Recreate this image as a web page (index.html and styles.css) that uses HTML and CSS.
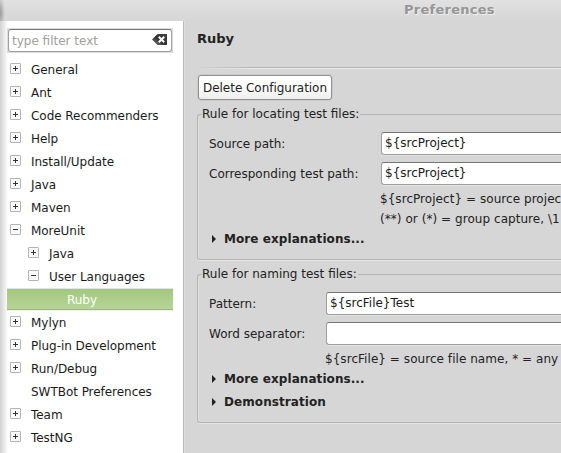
FILE: index.html
```html
<!DOCTYPE html>
<html lang="en">
<head>
<meta charset="utf-8">
<title>Preferences</title>
<link rel="stylesheet" href="styles.css">
</head>
<body>
<div class="window">
  <header class="titlebar"><span class="title">Preferences</span></header>
  <div class="content">
    <aside class="sidebar">
      <div class="filter">
        <div class="filter-box">
          <span>type filter text</span>
          <svg class="clear" width="15" height="11" viewBox="0 0 15 11">
            <defs><linearGradient id="key" x1="0" y1="1" x2="1" y2="0"><stop offset="0" stop-color="#777"/><stop offset=".5" stop-color="#333"/><stop offset="1" stop-color="#444"/></linearGradient></defs>
            <path d="M0 5.5L5 .5Q5.500 0 6.500 0H15V11H6.500Q5.500 11 5 10.500Z" fill="url(#key)"/>
            <path d="M7.500 3.500L11.500 7.500M11.500 3.500L7.500 7.500" stroke="#fff" stroke-width="2" stroke-linecap="square"/>
          </svg>
        </div>
      </div>
      <ul class="tree">
        <li><i class="toggle plus"></i><span>General</span></li>
        <li><i class="toggle plus"></i><span>Ant</span></li>
        <li><i class="toggle plus"></i><span>Code Recommenders</span></li>
        <li><i class="toggle plus"></i><span>Help</span></li>
        <li><i class="toggle plus"></i><span>Install/Update</span></li>
        <li><i class="toggle plus"></i><span>Java</span></li>
        <li><i class="toggle plus"></i><span>Maven</span></li>
        <li><i class="toggle"></i><span>MoreUnit</span></li>
        <li class="child"><i class="toggle plus"></i><span>Java</span></li>
        <li class="child"><i class="toggle"></i><span>User Languages</span></li>
        <li class="grandchild selected"><span>Ruby</span></li>
        <li><i class="toggle plus"></i><span>Mylyn</span></li>
        <li><i class="toggle plus"></i><span>Plug-in Development</span></li>
        <li><i class="toggle plus"></i><span>Run/Debug</span></li>
        <li class="leaf"><span>SWTBot Preferences</span></li>
        <li><i class="toggle plus"></i><span>Team</span></li>
        <li><i class="toggle plus"></i><span>TestNG</span></li>
      </ul>
    </aside>
    <main class="page">
      <h1>Ruby</h1>
      <div class="rule"></div>
      <button class="button">Delete Configuration</button>
      <fieldset class="group locating">
        <legend>Rule for locating test files:</legend>
        <div class="field"><label>Source path:</label><div class="input">${srcProject}</div></div>
        <div class="field"><label>Corresponding test path:</label><div class="input">${srcProject}</div></div>
        <p class="hint">${srcProject} = source projec<br>(**) or (*) = group capture, \1</p>
        <div class="expander"><i class="arrow"></i>More explanations...</div>
      </fieldset>
      <fieldset class="group naming">
        <legend>Rule for naming test files:</legend>
        <div class="field"><label>Pattern:</label><div class="input">${srcFile}Test</div></div>
        <div class="field"><label>Word separator:</label><div class="input"></div></div>
        <p class="hint">${srcFile} = source file name, * = any</p>
        <div class="expander"><i class="arrow"></i>More explanations...</div>
        <div class="expander"><i class="arrow"></i>Demonstration</div>
      </fieldset>
    </main>
  </div>
</div>
</body>
</html>
```
FILE: styles.css
```css
* { box-sizing: border-box; }
body {
  margin: 0;
  width: 561px;
  height: 453px;
  overflow: hidden;
  background: #d6d6d6;
  color: #222;
  font: 12px/20px "DejaVu Sans", sans-serif;
}
.window { width: 561px; height: 453px; overflow: hidden; }
.titlebar {
  height: 21px;
  padding-left: 404px;
  background:
    radial-gradient(ellipse 5px 18px at 0 13px, #999, transparent),
    linear-gradient(#e1e1e1, #d6d6d6);
}
.title {
  display: block;
  font-weight: bold;
  font-size: 13px;
  line-height: 20px;
  letter-spacing: .25px;
  color: #969696;
  text-shadow: 1px 1px 0 #eee;
}
.content { display: flex; height: 432px; }
.sidebar {
  width: 184px;
  flex: none;
  padding: 7px 10px 0 7px;
  border-right: 1px solid #b8b8b8;
  background: linear-gradient(90deg, #d2d2d2, #fff 8px);
}
.filter { height: 25px; padding: 1px; background: #dcdcdc; }
.filter-box {
  display: flex;
  align-items: center;
  justify-content: space-between;
  height: 23px;
  padding: 0 4px 0 3px;
  border: 1px solid #a0a0a0;
  border-top-color: #777;
  border-radius: 3px;
  background: #fff;
  color: #a0a0a0;
}
.clear { display: block; margin-bottom: 2px; }
.tree { margin: 5px 0 0; padding: 0; list-style: none; color: #1a1a1a; }
.tree li { display: flex; align-items: center; height: 23px; padding-left: 3px; letter-spacing: -.04px; }
.tree .child { padding-left: 21px; }
.tree .leaf { padding-left: 24px; }
.tree .grandchild { padding-left: 60px; }
.tree .selected {
  color: #fff;
  background:
    linear-gradient(#e4e4e4, #e4e4e4) 0 0 / 100% 1px no-repeat,
    linear-gradient(#a3c87f, #b5d597) 0 1px / 100% 20px no-repeat,
    linear-gradient(#9cb87e, #9cb87e) 0 21px / 100% 1px no-repeat,
    linear-gradient(#eee, #eee) 0 22px / 100% 1px no-repeat;
}
.toggle {
  width: 11px;
  height: 11px;
  margin: 0 10px 2px 0;
  border: 1px solid #b4b4b4;
  border-radius: 1px;
  background: linear-gradient(#333, #333) center / 5px 1px no-repeat, #fafafa;
}
.toggle.plus {
  background: linear-gradient(#333, #333) center / 5px 1px no-repeat,
    linear-gradient(#333, #333) center / 1px 5px no-repeat, #fafafa;
}
.page {
  flex: 1;
  min-width: 0;
  padding: 8px 0 0 14px;
  box-shadow: inset 1px 0 #e0e0e0;
}
h1 { margin: 0 0 0 -1px; font-size: 13px; line-height: 20px; }
.rule {
  height: 2px;
  margin: 18px 0 6px -6px;
  background: linear-gradient(#b5b5b5 50%, #e8e8e8 50%);
  -webkit-mask-image: linear-gradient(90deg, transparent, #000 60px);
}
.button {
  display: block;
  width: 134px;
  height: 25px;
  margin: 0;
  padding: 0;
  border: 1px solid #909090;
  border-radius: 3px;
  background: linear-gradient(#fff 45%, #ededed);
  box-shadow: 0 0 0 1px #cacaca;
  font: inherit;
  letter-spacing: -.03px;
  color: inherit;
}
.group {
  min-width: 0;
  margin: 0 0 0 -1px;
  padding: 0 0 0 11px;
  border: 1px solid #b5b5b5;
  border-right: 0;
  border-radius: 3px 0 0 3px;
  box-shadow: inset 1px 0 #dfdfdf, 0 1px #e4e4e4;
}
legend { margin-left: -7px; padding: 0 1px 0 0; line-height: 20px; }
.locating { height: 156px; margin-top: 4px; }
.naming { height: 159px; margin-top: 4px; }
.field { display: flex; align-items: center; height: 30px; }
.locating label { width: 172px; }
.naming label { width: 117px; }
.locating .field:nth-of-type(1),
.naming .field:nth-of-type(1) { margin-top: 5px; }
.input {
  flex: 1;
  height: 23px;
  margin-bottom: 1px;
  padding-left: 3px;
  border: 1px solid #9e9e9e;
  border-top-color: #757575;
  border-right: 0;
  border-radius: 3px 0 0 3px;
  background: #fff;
  box-shadow: 0 1px #e4e4e4;
  color: #1a1a1a;
  line-height: 21px;
}
.hint { margin: 0 0 -2px 171px; white-space: nowrap; letter-spacing: .05px; }
.naming .hint { margin-left: 116px; }
.expander {
  display: flex;
  align-items: center;
  height: 23px;
  font-weight: bold;
  letter-spacing: .07px;
}
.arrow {
  margin: 0 8px 0 3px;
  border: solid transparent;
  border-width: 4px 0 4px 4px;
  border-left-color: #222;
}
```
